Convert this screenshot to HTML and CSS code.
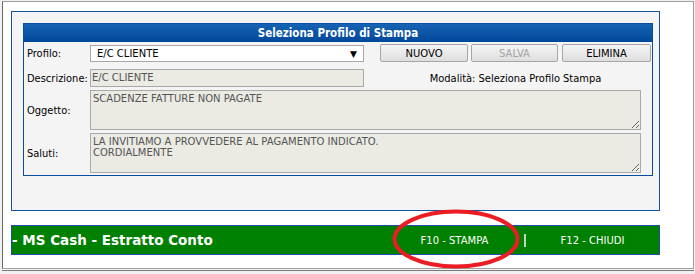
FILE: index.html
```html
<!DOCTYPE html>
<html lang="it">
<head>
    <meta charset="UTF-8">
    <meta name="viewport" content="width=device-width, initial-scale=1.0">
    <title>MS Cash - Estratto Conto</title>
    <link rel="stylesheet" href="styles.css">
</head>
<body>

<div class="frame">
    <div class="box">
        <div class="profile">
            <div class="profile-title">Seleziona Profilo di Stampa</div>

            <div class="row row-first">
                <label class="label">Profilo:</label>
                <div class="select">
                    <span>E/C CLIENTE</span>
                    <span class="arrow">&#9660;</span>
                </div>
                <div class="buttons">
                    <button class="btn btn-new">NUOVO</button>
                    <button class="btn btn-save" disabled>SALVA</button>
                    <button class="btn btn-delete">ELIMINA</button>
                </div>
            </div>

            <div class="row row-desc">
                <label class="label">Descrizione:</label>
                <div class="field">E/C CLIENTE</div>
                <div class="mode">Modalità: Seleziona Profilo Stampa</div>
            </div>

            <div class="row row-text">
                <label class="label">Oggetto:</label>
                <textarea class="area" readonly>SCADENZE FATTURE NON PAGATE</textarea>
            </div>

            <div class="row row-text">
                <label class="label">Saluti:</label>
                <textarea class="area" readonly>LA INVITIAMO A PROVVEDERE AL PAGAMENTO INDICATO.
CORDIALMENTE</textarea>
            </div>
        </div>
    </div>

    <div class="actionbar">
        <div class="actionbar-title">- MS Cash - Estratto Conto</div>
        <a class="action action-print">F10 - STAMPA</a>
        <span class="sep"></span>
        <a class="action">F12 - CHIUDI</a>
    </div>
</div>
<div class="frame-foot"></div>

<!-- cerchio rosso sopra il tasto stampa -->
<svg class="mark" width="128" height="60" viewBox="0 0 128 60">
    <ellipse cx="64" cy="30" rx="61.5" ry="27.5" fill="none" stroke="#ec1c24" stroke-width="4"/>
</svg>

</body>
</html>
```

FILE: styles.css
```css
* {
    margin: 0;
    padding: 0;
    box-sizing: border-box;
}

body {
    background-color: #f0f0f0;
    padding: 1px 1px 0 2px;
    font-family: "DejaVu Sans", Verdana, sans-serif;
    font-size: 10px;
    color: #000;
    position: relative;
    overflow: hidden;
    height: 274px;
}

.frame {
    width: 692px;
    height: 268px;
    background-color: #fff;
    border-left: 1px solid #696969;
    border-top: 1px solid #a0a0a0;
    border-right: 1px solid #a0a0a0;
    border-bottom: 1px solid #a0a0a0;
    padding: 9px 0 0 8px;
}

.frame-foot {
    width: 692px;
    height: 1px;
    margin-top: 1px;
    background-color: #7c7c7c;
}

.box {
    width: 649px;
    height: 200px;
    border: 1px solid #1652a0;
    background-color: #f4f4f4;
    padding: 11px;
}

.profile {
    width: 630px;
    height: 153px;
    border: 1px solid #0b4b9f;
    background-color: #f4f4f4;
}

.profile-title {
    height: 18px;
    line-height: 18px;
    text-align: center;
    color: #fff;
    font-family: "DejaVu Sans Condensed", "DejaVu Sans", sans-serif;
    font-weight: bold;
    font-size: 11.5px;
    background: linear-gradient(#1763b3, #00479a);
}

.row {
    display: flex;
    align-items: center;
}

.row-first {
    height: 18px;
    margin-top: 2px;
}

.row-desc {
    height: 18px;
    margin-top: 7px;
}

.row-text {
    height: 40px;
    margin-top: 3px;
}

.label {
    width: 66px;
    padding-left: 3px;
    font-family: "DejaVu Sans Condensed", "DejaVu Sans", sans-serif;
    font-size: 11px;
}

.select {
    width: 274px;
    height: 17px;
    align-self: flex-end;
    display: flex;
    align-items: center;
    justify-content: space-between;
    padding: 0 6px 0 6px;
    background-color: #fff;
    border: 1px solid #a9a9a9;
}

.select .arrow {
    font-size: 9px;
}

.buttons {
    margin-left: 16px;
    display: flex;
}

.btn {
    height: 18px;
    font-family: "DejaVu Sans", Verdana, sans-serif;
    font-size: 10px;
    color: #000;
    border: 1px solid #a6a6a6;
    border-radius: 2px;
    background: linear-gradient(#f5f5f5, #dedede);
}

.btn-new {
    width: 88px;
}

.btn-save {
    width: 87px;
    margin-left: 3px;
    color: #a3a3a3;
}

.btn-delete {
    width: 89px;
    margin-left: 4px;
}

.field {
    width: 274px;
    height: 18px;
    line-height: 16px;
    padding-left: 1px;
    color: #545454;
    background-color: #ebebe4;
    border: 1px solid #a9a9a9;
}

.mode {
    margin-left: 16px;
    width: 271px;
    text-align: center;
    font-family: "DejaVu Sans Condensed", "DejaVu Sans", sans-serif;
    font-size: 11px;
}

.area {
    width: 551px;
    height: 40px;
    padding: 2px 2px;
    font-family: "DejaVu Sans", Verdana, sans-serif;
    font-size: 10px;
    line-height: 11px;
    color: #545454;
    background-color: #ebebe4;
    border: 1px solid #a9a9a9;
    outline: none;
    overflow: hidden;
}

.actionbar {
    width: 649px;
    height: 30px;
    margin-top: 14px;
    display: flex;
    align-items: center;
    background-color: #008000;
    border: 1px solid #1a50a0;
    color: #fff;
}

.actionbar-title {
    flex: 1;
    font-weight: bold;
    font-size: 13.5px;
}

.action {
    width: 133px;
    text-align: center;
    font-size: 10px;
    color: #fff;
    text-decoration: none;
    cursor: pointer;
}

.action-print {
    padding-right: 6px;
}

.sep {
    width: 2px;
    height: 13px;
    background-color: #b9dcb9;
}

.mark {
    position: absolute;
    left: 392px;
    top: 209px;
}
```
